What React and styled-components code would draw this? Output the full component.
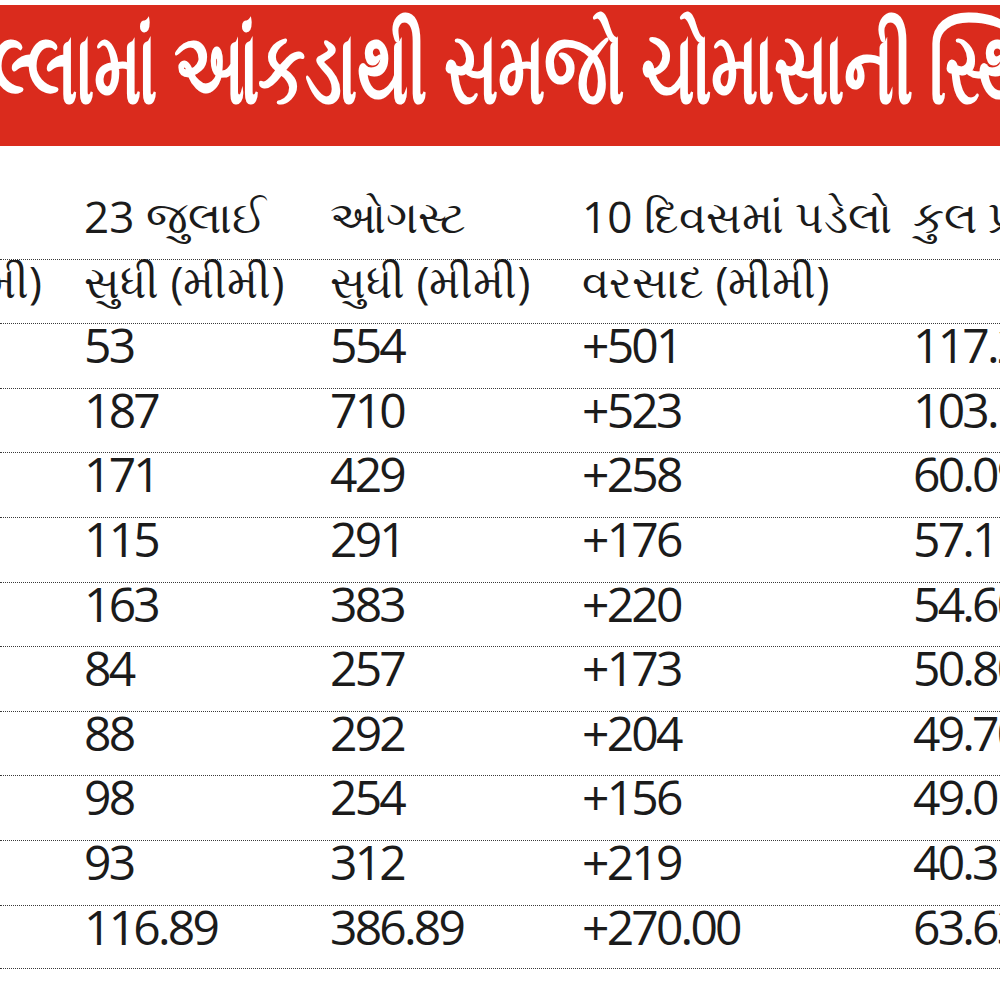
import React from "react";
import styled, { createGlobalStyle } from "styled-components";

const GlobalStyle = createGlobalStyle`
  html, body {
    margin: 0;
    padding: 0;
    background: #ffffff;
    overflow: hidden;
  }
  body {
    font-family: "Open Sans", "Noto Sans", sans-serif;
    color: #1b1b1b;
  }
`;

const Page = styled.div`
  width: 1000px;
  height: 1000px;
  overflow: hidden;
  padding-top: 5px;
  box-sizing: border-box;
`;

const Banner = styled.div`
  height: 141px;
  background: #da2b1d;
  overflow: hidden;
  display: flex;
  align-items: center;
  padding-bottom: 22px;
  box-sizing: border-box;
`;

const Title = styled.h1`
  margin: 0 0 0 -86px;
  white-space: nowrap;
  color: #ffffff;
  font-family: "Noto Sans", "Open Sans", sans-serif;
  font-weight: 700;
  font-size: 101px;
  line-height: 1;
  letter-spacing: -1px;
  transform: scaleX(0.665);
  transform-origin: left center;
`;

const Table = styled.div`
  margin-top: 48px;
`;

const Row = styled.div`
  display: grid;
  grid-template-columns: 84px 246px 252px 331px 1fr;
  height: 64.6px;
  box-sizing: border-box;
  border-top: ${(p) => (p.$line ? "1.5px dotted #3a3a3a" : "1.5px solid transparent")};
  border-bottom: ${(p) => (p.$last ? "1.5px dotted #3a3a3a" : "none")};
`;

const Cell = styled.div`
  white-space: nowrap;
  overflow: ${(p) => (p.$clip ? "hidden" : "visible")};
  display: flex;
  justify-content: ${(p) => (p.$right ? "flex-end" : "flex-start")};
  padding-right: ${(p) => (p.$right ? "42px" : "0")};
  font-size: ${(p) => (p.$head ? "44px" : "48px")};
  line-height: 42px;
  letter-spacing: ${(p) => (p.$head ? "0" : "-2.8px")};
  font-weight: 400;
`;

const headTop = ["", "23 જુલાઈ", "ઓગસ્ટ", "10 દિવસમાં પડેલો", "કુલ પ્રમાણ (%)"];
const headBottom = ["(મીમી)", "સુધી (મીમી)", "સુધી (મીમી)", "વરસાદ (મીમી)", ""];

const rows = [
  ["53", "554", "+501", "117.29"],
  ["187", "710", "+523", "103.18"],
  ["171", "429", "+258", "60.09"],
  ["115", "291", "+176", "57.11"],
  ["163", "383", "+220", "54.60"],
  ["84", "257", "+173", "50.80"],
  ["88", "292", "+204", "49.70"],
  ["98", "254", "+156", "49.01"],
  ["93", "312", "+219", "40.31"],
  ["116.89", "386.89", "+270.00", "63.63"],
];

function HeadRow({ cells, line }) {
  return (
    <Row $line={line}>
      {cells.map((c, i) => (
        <Cell key={i} $head $right={i === 0} $clip={i === 0}>
          {c}
        </Cell>
      ))}
    </Row>
  );
}

export default function App() {
  return (
    <Page>
      <GlobalStyle />
      <Banner>
        <Title>જિલ્લામાં આંકડાથી સમજો ચોમાસાની સ્થિતિ</Title>
      </Banner>
      <Table>
        <HeadRow cells={headTop} />
        <HeadRow cells={headBottom} line />
        {rows.map((r, i) => (
          <Row key={i} $line $last={i === rows.length - 1}>
            <Cell $right $clip>
              {""}
            </Cell>
            {r.map((v, j) => (
              <Cell key={j}>{v}</Cell>
            ))}
          </Row>
        ))}
      </Table>
    </Page>
  );
}
